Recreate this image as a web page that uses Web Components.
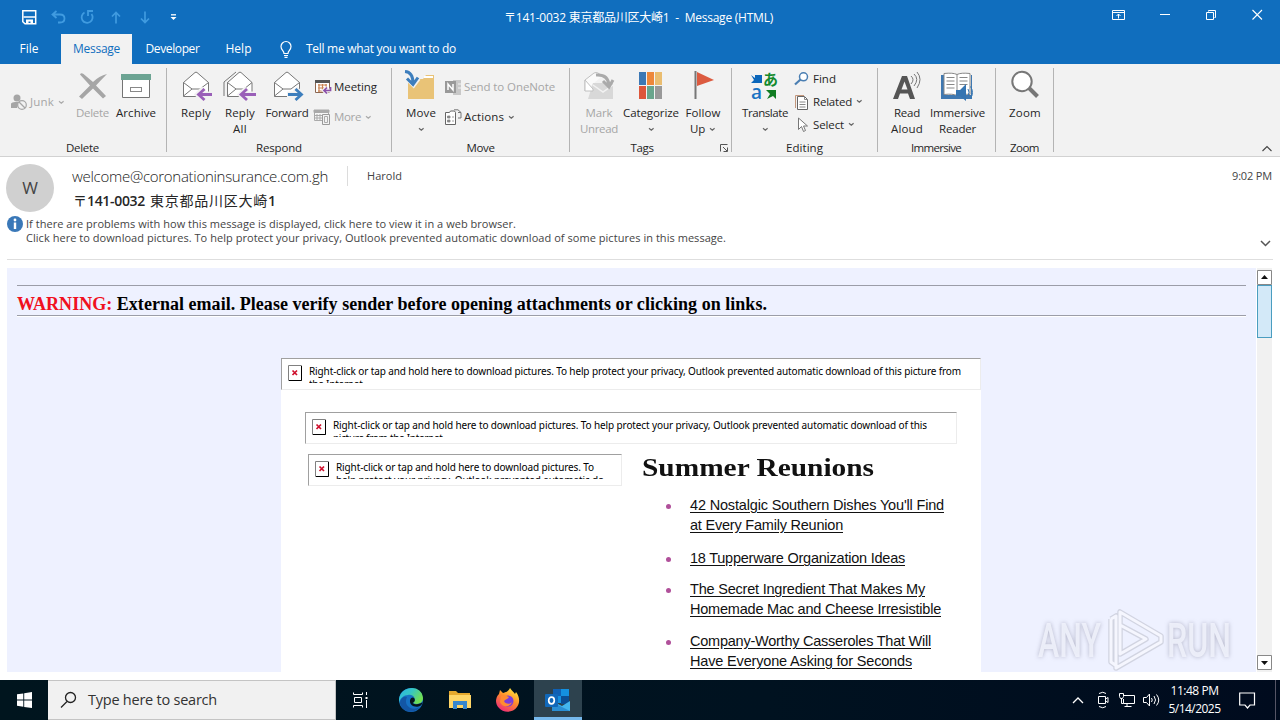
<!DOCTYPE html>
<html lang="en">
<head>
<meta charset="utf-8">
<title>Message (HTML)</title>
<style>
  body {
    margin: 0;
    width: 1280px;
    height: 720px;
    overflow: hidden;
    background: #fff;
    color: #262626;
    font: 11.5px/16px "Open Sans", "Noto Sans CJK JP", sans-serif;
  }
</style>
</head>
<body>
<mail-app></mail-app>

<script>
const icons = {
  save: [15, 15, `<path d="M.8.8h12.900v12.900H3l-2.200-2z" fill="none" stroke="#fff" stroke-width="1.500"/><path d="M1.500 7h11.500" stroke="#fff" stroke-width="1.500"/><path d="M4 14V9.500h7V14H8.500v-2.500H6.500V14z" fill="#fff"/>`],
  undo: [15, 14, `<path d="M5.500 1L1.500 4.500 5.500 8M2 4.500h7c6 0 6 8 0 8H7" fill="none" stroke="#409be0" stroke-width="1.800"/>`],
  redo: [14, 14, `<path d="M4.500 2.500A5.500 5.500 0 1 0 11.500 4M13 1H8v5M8 6V1" fill="none" stroke="#409be0" stroke-width="1.800"/>`],
  up: [10, 13, `<path d="M5 12.500V1.500M1 5.500l4-4 4 4" fill="none" stroke="#409be0" stroke-width="1.700"/>`],
  down: [10, 13, `<path d="M5 .5v11M1 7.500l4 4 4-4" fill="none" stroke="#409be0" stroke-width="1.700"/>`],
  customize: [7, 7, `<path d="M1 .8h5" stroke="#fff" stroke-width="1.300"/><path d="M.5 3h6L3.500 6z" fill="#fff"/>`],
  ribbonbox: [14, 11, `<path d="M.5.5h12v9H.5zM.5 2.500h12M6.500 8.500V4M4.500 6l2-2 2 2" fill="none" stroke="#fff"/>`],
  min: [11, 11, `<path d="M0 4.500h10" stroke="#fff"/>`],
  restore: [11, 11, `<path d="M.5 2.500h7v7h-7zM2.500 1.500v-1h7v7h-1" fill="none" stroke="#fff"/>`],
  close: [11, 11, `<path d="M.5 0l9.500 9.500M10 0L.5 9.500" stroke="#fff" stroke-width="1.100"/>`],
  bulb: [12, 17, `<path d="M4 12.500c0-3-3-3.500-3-7a5 5 0 0 1 10 0c0 3.500-3 4-3 7zM4 14.500h4M4.500 16.300h3" fill="none" stroke="#fff" stroke-width="1.200"/>`],
  chev: [7, 5, `<path d="M1 1.200l2.300 2 2.300-2" fill="none" stroke="currentColor" stroke-width="1.200"/>`],
  collapse: [11, 7, `<path d="M.5 6l4.500-4.500L9.500 6" fill="none" stroke="#444" stroke-width="1.100"/>`],
  expand: [12, 8, `<path d="M1 1l4.500 4.500L10 1" fill="none" stroke="#555" stroke-width="1.500"/>`],
  launcher: [8, 8, `<path d="M.5 7.500v-7h7M3 3l4 4M7.500 3.500v4h-4" fill="none" stroke="#555"/>`],
  junk: [16, 16, `<circle cx="6" cy="4" r="3.500" fill="#a6a6a6"/><path d="M0 14V9.500Q1 8 4 8h4l-2 6z" fill="#a6a6a6"/><circle cx="11" cy="11" r="4.300" fill="#f2f2f2" stroke="#a6a6a6" stroke-width="1.200"/><path d="M8 8l6 6" stroke="#a6a6a6" stroke-width="1.200"/>`],
  del: [30, 28, `<path d="M2 2.500Q3 .5 5.500 2 L15 10 Q21 4 29 2 Q23 8 18 13.500 L28 24 25 26.500 15 16.500 Q9 22 4 27 L1 24.500 12 13.500z" fill="#a6a6a6"/>`],
  archive: [30, 26, `<path d="M1.500 7v17.500h27V7" fill="#fff" stroke="#747474"/><path d="M0 1h30v6H0z" fill="#6ca493"/><rect x="9.500" y="14.500" width="11" height="4" fill="#fff" stroke="#888"/>`],
  reply: [30, 30, `<path d="M1.500 11.500L13 1.500q1-.7 2 0l11.500 10v14h-25z" fill="#fff" stroke="#777"/><path d="M1.500 11.500l8.500 6.500h8l8.500-6.500M1.500 25l8.500-7" fill="none" stroke="#777"/><path d="M29 23.500H17M22 17.500l-6 6 6 6" fill="none" stroke="#f2f2f2" stroke-width="6"/><path d="M30 23.500H17M22.500 18l-6 5.500 6 5.500" fill="none" stroke="#9a5fb8" stroke-width="2.800"/>`],
  replyall: [33, 30, `<path d="M1 25V11L13 1" fill="none" stroke="#777"/><path d="M4.500 11.500L16 1.500q1-.7 2 0l11 10v14H4.500z" fill="#fff" stroke="#777"/><path d="M4.500 11.500l8.500 6.500h8l8-6.500M4.500 25l8.500-7" fill="none" stroke="#777"/><path d="M33 23.500H18M24 17.500l-6 6 6 6" fill="none" stroke="#f2f2f2" stroke-width="6"/><path d="M33 23.500H18M24 18l-6 5.500 6 5.500" fill="none" stroke="#9a5fb8" stroke-width="2.800"/>`],
  forward: [30, 30, `<path d="M1.500 11.500L13 1.500q1-.7 2 0l11.500 10v14h-25z" fill="#fff" stroke="#777"/><path d="M1.500 11.500l8.500 6.500h8l8.500-6.500M1.500 25l8.500-7" fill="none" stroke="#777"/><path d="M14 23.500h13M22 17.500l6 6-6 6" fill="none" stroke="#f2f2f2" stroke-width="6"/><path d="M15 23.500h13M22.500 18l6 5.500-6 5.500" fill="none" stroke="#3d7ebd" stroke-width="2.800"/>`],
  meeting: [16, 16, `<path d="M.5 1.500h14v12H.5z" fill="#fff" stroke="#8b6650"/><path d="M0 1h15v3H0z" fill="#555"/><path d="M3 6h9M3 9h6M3 12h5M4 5v8M7.500 5v8M11 5v4" stroke="#c98250" stroke-width="1.200"/><path d="M15 11.500H9M12 8.500l-3 3 3 3" fill="none" stroke="#f2f2f2" stroke-width="4"/><path d="M15.500 8v3.500H9M12 8.500l-3 3 3 3" fill="none" stroke="#8a50a8" stroke-width="1.700"/>`],
  more: [16, 16, `<path d="M.5 1.500h14v10H.5z" fill="#f6f6f6" stroke="#aaa"/><path d="M0 1h15v2.500H0zM3 5v6M6 5v6M1 6.500h7M1 9h7" fill="#aaa" stroke="#aaa"/><path d="M8.500 5.500h7v10h-7z" fill="#f2f2f2" stroke="#999"/><path d="M10.500 7.500h3v6h-3z" fill="none" stroke="#aaa"/>`],
  move: [31, 29, `<path d="M3 9h15l3-4h8v24H3z" fill="#e9c377"/><path d="M19 7h9" stroke="#fff" stroke-width="2"/><path d="M0 0q9 1 9 12M2.500 8l6 6 4.500-6" fill="none" stroke="#f2f2f2" stroke-width="6"/><path d="M0 1.500q8 .5 8 12M2 8.500l6 6 5-7" fill="none" stroke="#3d7ebd" stroke-width="3"/>`],
  onenote: [16, 16, `<path d="M8 1h8v15H8z" fill="#c8c8c8"/><path d="M0 2h11v12H0z" fill="#999"/><path d="M3 11V5l5 6V5" fill="none" stroke="#fff" stroke-width="1.500"/><path d="M13 5h3M13 9h3" stroke="#f2f2f2"/>`],
  actions: [17, 17, `<path d="M.5 3.500h4l1-1.500h4l1 1.500v12H.5z" fill="#fff" stroke="#666"/><path d="M2.500 7h2.500v2H2.500zM2.500 11h2.500v2H2.500zM7 8h2M7 12h2" fill="#888" stroke="#888" stroke-width=".8"/><path d="M9 .8h4l3 2.700V9h-3M13 3.500h3" fill="none" stroke="#777"/>`],
  unread: [30, 30, `<path d="M1 20V9L10 2q2-1 4 0l4 3" fill="#fafafa" stroke="#c0c0c0"/><path d="M9 12h20v16H4z" fill="#d8d8d8"/><path d="M1 9l8 9v2H1z" fill="#fff" stroke="#c0c0c0"/><path d="M9 14l10 7 10-7" fill="none" stroke="#f2f2f2" stroke-width="1.500"/><path d="M12 4q12-1 13 10M19 10l6 6 4-7" fill="none" stroke="#aaa" stroke-width="3"/>`],
  categorize: [24, 28, `<path d="M0 0h7v13H0z" fill="#3c78b5"/><path d="M8 0h7v13H8z" fill="#ed873a"/><path d="M16 0h7v13h-7z" fill="#eabd70"/><path d="M0 14h7v13H0z" fill="#dd563b"/><path d="M8 14h7v13H8z" fill="#69a58c"/><path d="M16 14h7v13h-7z" fill="#999"/>`],
  flag: [20, 30, `<path d="M1.500 0v28" stroke="#777" stroke-width="2"/><path d="M3 1l17 8L3 15z" fill="#dc5b40"/>`],
  translate: [28, 30, `<path d="M1 4l4 3V4h7v8H1l3-3z" fill="#0b66bb"/><text x="1" y="28" font-family="Open Sans, sans-serif" font-size="19" font-weight="600" fill="#1a73c4">a</text><text x="13" y="14" font-family="Noto Sans CJK JP" font-size="15" font-weight="700" fill="#138a2d">あ</text><path d="M16 19h10v9l-3-3-6 3 3-5z" fill="#107c22"/>`],
  find: [16, 14, `<circle cx="9.500" cy="4.800" r="4" fill="#fff" stroke="#4a7eb2" stroke-width="1.500"/><path d="M6.500 7.500L1 12.500" stroke="#4a7eb2" stroke-width="2.200"/>`],
  related: [15, 16, `<path d="M1.500 14V1.500H10" fill="none" stroke="#c3977c"/><path d="M3.500 2.500h7l3 3v10h-10z" fill="#fff" stroke="#666"/><path d="M10.500 2.500v3h3M5.500 8h6M5.500 10.500h6M5.500 13h6" fill="none" stroke="#888"/>`],
  select: [16, 16, `<path d="M4.500 1v11.500l3-3 2 5 2-1-2-4.500h4z" fill="#fff" stroke="#777"/>`],
  read: [30, 30, `<path d="M1 28L10 5h5l8 23h-5l-2-5.500H8L6 28zM9.500 18.500h6l-3-8z" fill="#555"/><path d="M19 5q4 3.500 0 8M22 3q5.500 5 0 12M25 1q6 7 0 16" fill="none" stroke="#777"/>`],
  reader: [33, 31, `<path d="M0 4h4v20h10q2 0 3 1 1-1 3-1h10V4h1v24H0z" fill="#3f78b1"/><path d="M3 2.500q9-1 13 1 4-2 13-1v21q-9-1-13 1-4-2-13-1z" fill="#fff" stroke="#888"/><path d="M16 3.500v21M5.500 6.500h8M5.500 10h8M5.500 13.500h8M5.500 17h8M18.500 6.500h8M18.500 10h8M18.500 13.500h8" stroke="#888"/><path d="M15 19h4l6-6v17l-6-5h-4z" fill="#3575b2"/><path d="M27 18q2 3 0 7M29.500 15.500q4 6 0 12" fill="none" stroke="#3575b2"/>`],
  zoom: [30, 30, `<circle cx="12" cy="10.500" r="9.700" fill="#fff" stroke="#777" stroke-width="2"/><path d="M19 17l8.500 8.500" stroke="#777" stroke-width="4"/>`],
  info: [16, 16, `<circle cx="8" cy="8" r="8" fill="#3a78b8"/><path d="M8 6.500v6.500" stroke="#fff" stroke-width="2.400"/><circle cx="8" cy="4" r="1.400" fill="#fff"/>`],
  broken: [15, 17, `<path d="M.5.500h13v15H.5z" fill="#fff" stroke="#808080"/><path d="M1 15.500h12.500V1" fill="none" stroke="#000"/><path d="M4.500 5.500l4.500 4.500M9 5.500L4.500 10" stroke="#cf102d" stroke-width="1.700"/>`],
  arrowup: [15, 15, `<path d="M.5.500h14v14H.5z" fill="#fff" stroke="#888"/><path d="M4 9l3.500-4L11 9z" fill="#111"/>`],
  arrowdown: [15, 15, `<path d="M.5.500h14v14H.5z" fill="#fff" stroke="#888"/><path d="M4 6l3.500 4L11 6z" fill="#111"/>`],
  start: [15, 16, `<path d="M0 2.300l6.300-.9v6.200H0zM7.200 1.200L15 0v7.600H7.200zM0 8.500h6.300v6.200L0 13.800zM7.200 8.500H15v7.600l-7.800-1.100z" fill="#fff"/>`],
  search: [17, 18, `<circle cx="10.500" cy="6.500" r="5" fill="none" stroke="#222" stroke-width="1.300"/><path d="M7 10.500L1 16.500" stroke="#222" stroke-width="1.300"/>`],
  taskview: [16, 16, `<path d="M.5.500v2h9v-2M1.500 5.500h7v5h-7zM.5 15.500v-2h9v2M13.500 0v3M13.500 8v8" fill="none" stroke="#fff"/><path d="M12.500 5h2v2h-2z" fill="#fff"/>`],
  edge: [24, 24, `<defs><linearGradient id="e" x1="0" y1="0" x2="1" y2=".5"><stop stop-color="#2cb5e5"/><stop offset=".5" stop-color="#35c6c5"/><stop offset="1" stop-color="#72df50"/></linearGradient></defs><circle cx="12" cy="12" r="12" fill="#1671c4"/><path d="M0 11C2-3 23-4 24 10c0 6-6 7-10 5 4-5 0-9-5-8-4 0-8 3-9 8z" fill="url(#e)"/><path d="M8 9c-4 8 4 15 13 10-7 9-20 4-20-5 1-4 4-6 7-5z" fill="#1356a5"/><path d="M13.500 15c3 2.500 8 1 10-1-.5 3-2 4-4 4.500-5 1-9-2-8.500-6 .5-3 3-4 4.500-2 1 2 0 3.500-2 4.500z" fill="#06151d"/>`],
  folder: [22, 20, `<path d="M0 1h7l2 2h12v15H0z" fill="#e6a92d"/><path d="M0 5h22v13H0z" fill="#ffd667"/><path d="M4 11h14v8h-4v-4H8v4H4z" fill="#3787cf"/>`],
  firefox: [24, 24, `<defs><linearGradient id="f" x1=".8" y1="0" x2=".2" y2="1"><stop stop-color="#ffec3f"/><stop offset=".45" stop-color="#ff8d2b"/><stop offset="1" stop-color="#ed247d"/></linearGradient></defs><path d="M3 6l1-4 3 3c3-1 5-1 7-5 2 3 4 4 5 6l1-2c4 5 4 11 1 15-4 6-14 6-18 1-4-4-4-10 0-14z" fill="url(#f)"/><circle cx="12" cy="13" r="5.500" fill="#7a3cdb"/><path d="M5 8c3-2 6 0 8 1-1 2-3 2-5 4 1 3 6 4 8 1-1 5-10 6-12 0z" fill="#ff8b31"/>`],
  outlook: [26, 24, `<path d="M8 1h16v14H8z" fill="#1490df"/><path d="M8 1h8v7H8z" fill="#0f60b4"/><path d="M16 8h8v8h-8z" fill="#0b4e94"/><path d="M7 13l10 5 8-5v10H7z" fill="#43b6ee"/><path d="M7 14l18 9H7z" fill="#2a8fd4"/><rect y="6" width="13" height="13" rx="1" fill="#1168b9"/><ellipse cx="6.500" cy="12.500" rx="2.800" ry="3.300" fill="none" stroke="#fff" stroke-width="1.700"/>`],
  trayup: [12, 8, `<path d="M1 7l5-5 5 5" fill="none" stroke="#fff" stroke-width="1.300"/>`],
  meet: [12, 16, `<path d="M1.500 4.500h7v7h-7zM8.500 7l2.500-1.500v5L8.500 9M2 1.500q4-2.500 7 0M2 14.500q4 2.500 7 0" fill="none" stroke="#fff"/>`],
  network: [17, 14, `<path d="M5 2.500h10.500v8H4.500V6M8 10.500v3M5.500 13.500h7M.5.500h4v3l-1 2h-2l-1-2zM2.500 6v4.500h2" fill="none" stroke="#fff"/>`],
  volume: [17, 14, `<path d="M.5 4.500h3l3-3.500v12l-3-3.500h-3z" fill="none" stroke="#fff"/><path d="M8.500 5q1.500 2 0 4M11 3q3 4 0 8M13.500 1.500q4.500 5.500 0 11" fill="none" stroke="#fff"/>`],
  notice: [17, 17, `<path d="M.7 1h14.800v12H11l-2.500 3L6 13H.7z" fill="none" stroke="#fff" stroke-width="1.200"/>`],
  play: [56, 62, `<path d="M3 9v43l7 5M3 9l5-3v52l45-26v-6L12 2v42l26-15-26-14" fill="none" stroke="#b9bbc9" stroke-opacity=".55" stroke-width="5.500" stroke-linejoin="round"/><path d="M3 9v43l7 5M3 9l5-3v52l45-26v-6L12 2v42l26-15-26-14" fill="none" stroke="#f5f6fe" stroke-width="3" stroke-linejoin="round"/>`]
};

// base class: fills the shadow root from the class's static html
class Base extends HTMLElement {
  constructor() {
    super();
    const template = document.createElement("template");
    template.innerHTML = this.constructor.html;
    this.attachShadow({ mode: "open" });
    this.shadowRoot.appendChild(template.content.cloneNode(true));
  }
}

class UiIcon extends Base {
  static html = `<style>:host{display:block;flex:none;line-height:0} svg{display:block;overflow:visible}</style><span></span>`;
  connectedCallback() {
    const [w, h, body] = icons[this.getAttribute("name")];
    this.shadowRoot.querySelector("span").innerHTML =
      `<svg width="${w}" height="${h}" viewBox="0 0 ${w} ${h}">${body}</svg>`;
  }
}

// text tracked (or, with "stretch", scaled) to the width given in w
class FitText extends Base {
  static html = `<style>
    :host { display: block; flex: none; white-space: pre; }
    span { display: inline-block; transform-origin: 0 50%; text-decoration: var(--line, none); text-underline-offset: 1.5px; }
  </style><span><slot></slot></span>`;
  connectedCallback() {
    const span = this.shadowRoot.querySelector("span");
    const w = Number(this.getAttribute("w"));
    this.style.width = w + "px";
    const natural = span.getBoundingClientRect().width;
    if (this.hasAttribute("stretch")) {
      span.style.transform = `scaleX(${w / natural})`;
    } else {
      const n = this.textContent.length;
      span.style.letterSpacing = (w - natural) / n + "px";
    }
  }
}

class TitleBar extends Base {
  static html = `<style>
    :host { display: grid; grid-template-columns: 504px 1fr 162px; height: 34px; background: #106ebe; color: #fff; font-size: 12px; }
    .quick { display: flex; align-items: center; padding-left: 22px; }
    .name { padding-top: 10px; }
    .win { display: flex; padding: 10px 0 0; }
  </style>
  <div class="quick">
    <ui-icon name="save"></ui-icon>
    <ui-icon name="undo" style="margin-left:14px"></ui-icon>
    <ui-icon name="redo" style="margin-left:14px"></ui-icon>
    <ui-icon name="up" style="margin-left:17px"></ui-icon>
    <ui-icon name="down" style="margin-left:19px"></ui-icon>
    <ui-icon name="customize" style="margin-left:20px"></ui-icon>
  </div>
  <fit-text class="name" w="269">〒141-0032 東京都品川区大崎1  -  Message (HTML)</fit-text>
  <div class="win">
    <ui-icon name="ribbonbox" style="margin-right:34px;margin-left:-6px"></ui-icon>
    <ui-icon name="min" style="margin-right:35px"></ui-icon>
    <ui-icon name="restore" style="margin-right:35px"></ui-icon>
    <ui-icon name="close"></ui-icon>
  </div>`;
}

class TabStrip extends Base {
  static html = `<style>
    :host { display: flex; height: 30px; background: #106ebe; color: #fff; font-size: 12px; }
    div { display: flex; align-items: center; justify-content: center; }
    .active { background: #f2f2f2; color: #106ebe; }
  </style>
  <div style="width:61px"><fit-text w="19" style="margin-right:3px">File</fit-text></div>
  <div class="active" style="width:71px"><fit-text w="47">Message</fit-text></div>
  <div style="width:81px"><fit-text w="54">Developer</fit-text></div>
  <div style="width:51px"><fit-text w="26">Help</fit-text></div>
  <div style="margin-left:16px;gap:14px"><ui-icon name="bulb"></ui-icon><fit-text w="150">Tell me what you want to do</fit-text></div>`;
}

class RibbonGroup extends Base {
  static html = `<style>
    :host { display: grid; grid-template-columns: 1fr 1px; height: 92px; }
    .main { display: flex; flex-direction: column; }
    .items { display: flex; height: 76px; }
    .foot { display: flex; }
    .caption { flex: 1; display: flex; justify-content: center; }
    .sep { margin: 4px 0; background: #b4b4b4; }
  </style>
  <div class="main">
    <div class="items"><slot></slot></div>
    <div class="foot"><div class="caption"><slot name="caption"></slot></div><slot name="launcher"></slot></div>
  </div>
  <div class="sep"></div>`;
}

class BigButton extends Base {
  static html = `<style>
    :host { display: flex; flex-direction: column; align-items: center; flex: none; padding-top: 6px; }
    :host([off]) { color: #a6a6a6; }
    .art { display: flex; align-items: center; height: 32px; margin-bottom: 3px; }
    .second { display: flex; align-items: center; gap: 4px; height: 16px; }
    .second ::slotted(ui-icon), ::slotted(ui-icon) { color: #666; }
  </style>
  <div class="art"><slot name="icon"></slot></div>
  <slot></slot>
  <div class="second"><slot name="second"></slot></div>`;
}

class SmallButton extends Base {
  static html = `<style>
    :host { display: flex; align-items: center; height: var(--row, 30px); }
    :host([off]) { color: #a6a6a6; }
    .art { width: 16px; margin-right: var(--gap, 3px); }
    ui-icon { margin-left: 4px; color: #666; }
    :host([off]) ui-icon { color: #aaa; }
    :host(:not([menu])) .arrow { display: none; }
  </style>
  <div class="art"><slot name="icon"></slot></div>
  <slot></slot>
  <ui-icon class="arrow" name="chev"></ui-icon>`;
}

class MailRibbon extends Base {
  static html = `<style>
    :host { display: flex; height: 92px; background: #f2f2f2; border-bottom: 1px solid #d2d2d2; }
    .stack { display: flex; flex-direction: column; padding-top: 8px; }
    .end { margin: auto 7px 4px auto; }
  </style>
  <ribbon-group style="width:167px">
    <div class="stack" style="width:61px;padding:23px 0 0 11px"><small-button off menu><ui-icon slot="icon" name="junk"></ui-icon><fit-text w="24">Junk</fit-text></small-button></div>
    <big-button off style="width:41px"><ui-icon slot="icon" name="del"></ui-icon><fit-text w="33">Delete</fit-text></big-button>
    <big-button style="width:46px"><ui-icon slot="icon" name="archive"></ui-icon><fit-text w="40">Archive</fit-text></big-button>
    <fit-text slot="caption" w="33" style="margin-right:1px">Delete</fit-text>
  </ribbon-group>
  <ribbon-group style="width:225px">
    <big-button style="width:42px;margin-left:8px"><ui-icon slot="icon" name="reply" style="margin-left:1px"></ui-icon><fit-text w="30">Reply</fit-text></big-button>
    <big-button style="width:46px"><ui-icon slot="icon" name="replyall" style="margin-right:1px"></ui-icon><fit-text w="30">Reply</fit-text><fit-text slot="second" w="14">All</fit-text></big-button>
    <big-button style="width:48px"><ui-icon slot="icon" name="forward" style="margin-left:1px"></ui-icon><fit-text w="43">Forward</fit-text></big-button>
    <div class="stack" style="margin-left:3px;--gap:4px">
      <small-button><ui-icon slot="icon" name="meeting" style="margin-left:1px"></ui-icon><fit-text w="43">Meeting</fit-text></small-button>
      <small-button off menu><ui-icon slot="icon" name="more"></ui-icon><fit-text w="27">More</fit-text></small-button>
    </div>
    <fit-text slot="caption" w="46">Respond</fit-text>
  </ribbon-group>
  <ribbon-group style="width:178px">
    <big-button style="width:42px;margin-left:8px"><ui-icon slot="icon" name="move" style="margin:-3px 2px 0 0"></ui-icon><fit-text w="30">Move</fit-text><ui-icon slot="second" name="chev"></ui-icon></big-button>
    <div class="stack" style="margin-left:3px">
      <small-button off><ui-icon slot="icon" name="onenote"></ui-icon><fit-text w="91">Send to OneNote</fit-text></small-button>
      <small-button menu><ui-icon slot="icon" name="actions"></ui-icon><fit-text w="40">Actions</fit-text></small-button>
    </div>
    <fit-text slot="caption" w="28">Move</fit-text>
  </ribbon-group>
  <ribbon-group style="width:162px">
    <big-button off style="width:44px;margin-left:7px"><ui-icon slot="icon" name="unread"></ui-icon><fit-text w="27">Mark</fit-text><fit-text slot="second" w="38">Unread</fit-text></big-button>
    <big-button style="width:60px"><ui-icon slot="icon" name="categorize"></ui-icon><fit-text w="56">Categorize</fit-text><ui-icon slot="second" name="chev"></ui-icon></big-button>
    <big-button style="width:44px"><ui-icon slot="icon" name="flag" style="margin-left:2px"></ui-icon><fit-text w="35">Follow</fit-text><fit-text slot="second" w="15">Up</fit-text><ui-icon slot="second" name="chev"></ui-icon></big-button>
    <fit-text slot="caption" w="23" style="margin-right:2px">Tags</fit-text>
    <ui-icon slot="launcher" name="launcher" style="margin:4px 3px 0 4px"></ui-icon>
  </ribbon-group>
  <ribbon-group style="width:146px">
    <big-button style="width:50px;margin-left:8px"><ui-icon slot="icon" name="translate" style="margin-right:2px"></ui-icon><fit-text w="46">Translate</fit-text><ui-icon slot="second" name="chev"></ui-icon></big-button>
    <div class="stack" style="margin-left:4px;padding-top:3px;--row:23px">
      <small-button><ui-icon slot="icon" name="find"></ui-icon><fit-text w="23">Find</fit-text></small-button>
      <small-button menu><ui-icon slot="icon" name="related"></ui-icon><fit-text w="39">Related</fit-text></small-button>
      <small-button menu><ui-icon slot="icon" name="select"></ui-icon><fit-text w="31">Select</fit-text></small-button>
    </div>
    <fit-text slot="caption" w="37">Editing</fit-text>
  </ribbon-group>
  <ribbon-group style="width:118px">
    <big-button style="width:40px;margin-left:9px"><ui-icon slot="icon" name="read"></ui-icon><fit-text w="26">Read</fit-text><fit-text slot="second" w="32">Aloud</fit-text></big-button>
    <big-button style="width:61px"><ui-icon slot="icon" name="reader"></ui-icon><fit-text w="55">Immersive</fit-text><fit-text slot="second" w="37">Reader</fit-text></big-button>
    <fit-text slot="caption" w="50" style="margin-right:1px">Immersive</fit-text>
  </ribbon-group>
  <ribbon-group style="width:58px">
    <big-button style="width:42px;margin-left:8px"><ui-icon slot="icon" name="zoom"></ui-icon><fit-text w="32">Zoom</fit-text></big-button>
    <fit-text slot="caption" w="29">Zoom</fit-text>
  </ribbon-group>
  <ui-icon class="end" name="collapse"></ui-icon>`;
}

class MessageHeader extends Base {
  static html = `<style>
    :host { display: block; height: 111px; box-sizing: border-box; color: #444; font-size: 11px; line-height: 14px; }
    .top { display: grid; grid-template-columns: 48px 1fr; padding: 7px 8px 0 6px; column-gap: 18px; height: 48px; }
    .avatar { width: 48px; height: 48px; border-radius: 50%; background: #d0d0d0; font-size: 17px; display: flex; align-items: center; justify-content: center; }
    .row { display: flex; align-items: center; height: 23px; }
    .from { font: 300 15px/20px "Open Sans", sans-serif; color: #222; }
    .bar { width: 1px; height: 20px; margin: 0 19px; background: #dcdcdc; }
    .subject { display: flex; font-size: 14px; line-height: 24px; color: #262626; margin: 2px 0 0 1px; }
    .bold { font-weight: 600; }
    .info { display: grid; grid-template-columns: 16px 1fr 12px; column-gap: 3px; margin: 5px 8px 0 7px; }
    .line { height: 1px; background: #dedede; margin: 11px 7px 0; }
  </style>
  <div class="top">
    <div class="avatar">W</div>
    <div>
      <div class="row">
        <fit-text class="from" w="256">welcome@coronationinsurance.com.gh</fit-text>
        <span class="bar"></span><fit-text w="35">Harold</fit-text>
        <fit-text w="40" style="margin-left:auto">9:02 PM</fit-text>
      </div>
      <div class="subject">
        <fit-text w="14">〒</fit-text><fit-text class="bold" w="58">141-0032</fit-text>
        <fit-text w="118" style="margin-left:5px">東京都品川区大崎</fit-text><fit-text class="bold" w="8">1</fit-text>
      </div>
    </div>
  </div>
  <div class="info">
    <ui-icon name="info" style="margin-top:-1px"></ui-icon>
    <div>
      <fit-text w="490">If there are problems with how this message is displayed, click here to view it in a web browser.</fit-text>
      <fit-text w="700">Click here to download pictures. To help protect your privacy, Outlook prevented automatic download of some pictures in this message.</fit-text>
    </div>
    <ui-icon name="expand" style="margin-top:23px"></ui-icon>
  </div>
  <div class="line"></div>`;
}

class BlockedPicture extends Base {
  static html = `<style>
    :host { display: flex; box-sizing: border-box; height: 32px; padding: 6px 0 0 6px; gap: 6px; background: #fff;
      border: 1px solid; border-color: #a0a0a0 #ececec #ececec #a0a0a0; color: #000; font: 10px/13px "Noto Sans", sans-serif; }
    .text { height: 18px; overflow: hidden; }
  </style>
  <ui-icon name="broken"></ui-icon>
  <div class="text"><slot></slot></div>`;
}

class LinkItem extends Base {
  static html = `<style>
    :host { display: grid; grid-template-columns: 24px 1fr; color: #111; font: 14.5px/20px "Liberation Sans", sans-serif; --line: underline; }
    i { width: 5px; height: 5px; border-radius: 50%; margin-top: 9px; background: #b0509a; }
  </style><i></i><a><slot></slot></a>`;
}

class ScrollBar extends Base {
  static html = `<style>
    :host { display: flex; flex-direction: column; width: 15px; padding: 2px 0; box-sizing: border-box; background: #f1f1f1; }
    .thumb { height: 51px; border: 1px solid #4a9dc0; background: #d3e9f8; }
    .rest { flex: 1; }
  </style>
  <ui-icon name="arrowup"></ui-icon><div class="thumb"></div><div class="rest"></div><ui-icon name="arrowdown"></ui-icon>`;
}

class MessageBody extends Base {
  static html = `<style>
    :host { display: grid; grid-template-columns: 1249px 15px; column-gap: 1px; padding: 0 8px 8px 7px; height: 404px; }
    .page { background: #eef1ff; overflow: hidden; height: 404px; }
    .warn { margin: 17px 10px 0; border: solid #9b9da8; border-width: 1px 0; height: 29px; box-shadow: 0 1px #fff;
      font: bold 18px/36px "Liberation Serif", serif; color: #000; }
    .red { color: #f01020; }
    .mail { width: 700px; margin: 42px 0 0 274px; background: #fff; height: 330px; }
    .cols { display: grid; grid-template-columns: 314px 1fr; column-gap: 20px; padding: 10px 0 0 27px; align-items: start; }
    h1 { margin: -1px 0 0; font: bold 26px/30px "Liberation Serif", serif; color: #111; }
    .list { display: flex; flex-direction: column; gap: 12px; padding: 12px 0 0 24px; }
  </style>
  <div class="page">
    <div class="warn"><fit-text w="750"><span class="red">WARNING:</span> External email. Please verify sender before opening attachments or clicking on links.</fit-text></div>
    <div class="mail">
      <blocked-picture><fit-text w="652">Right-click or tap and hold here to download pictures. To help protect your privacy, Outlook prevented automatic download of this picture from</fit-text><fit-text w="56">the Internet.</fit-text></blocked-picture>
      <blocked-picture style="margin:22px 24px 0"><fit-text w="594">Right-click or tap and hold here to download pictures. To help protect your privacy, Outlook prevented automatic download of this</fit-text><fit-text w="112">picture from the Internet.</fit-text></blocked-picture>
      <div class="cols">
        <blocked-picture><fit-text w="258">Right-click or tap and hold here to download pictures. To</fit-text><fit-text w="268">help protect your privacy, Outlook prevented automatic do</fit-text></blocked-picture>
        <div>
          <h1><fit-text w="232" stretch>Summer Reunions</fit-text></h1>
          <div class="list">
            <link-item><fit-text w="254">42 Nostalgic Southern Dishes You'll Find</fit-text><fit-text w="153">at Every Family Reunion</fit-text></link-item>
            <link-item style="margin:1px 0 -1px"><fit-text w="215">18 Tupperware Organization Ideas</fit-text></link-item>
            <link-item><fit-text w="235">The Secret Ingredient That Makes My</fit-text><fit-text w="251">Homemade Mac and Cheese Irresistible</fit-text></link-item>
            <link-item><fit-text w="241">Company-Worthy Casseroles That Will</fit-text><fit-text w="222">Have Everyone Asking for Seconds</fit-text></link-item>
          </div>
        </div>
      </div>
    </div>
  </div>
  <scroll-bar></scroll-bar>`;
}

class TaskBar extends Base {
  static html = `<style>
    :host { display: flex; height: 40px; background: linear-gradient(90deg, #00151e, #001220 60%, #000b1e); color: #fff; font-size: 12px; line-height: 18px; }
    div { display: flex; align-items: center; justify-content: center; width: 49px; flex: none; }
    .search { box-sizing: border-box; width: 288px; justify-content: flex-start; gap: 11px; padding-left: 12px; background: #f1f1f1; border: 1px solid #c4c4c4; border-left: 0; color: #333; font-size: 14.5px; }
    .on { width: 48px; background: #2d424e; box-shadow: inset 0 -3px #76b9ed; }
    .tray { width: auto; margin-left: auto; }
    .clock { flex-direction: column; width: 53px; margin: 0 18px 0 8px; }
    .desk { width: 1px; height: 40px; margin: 0 4px 0 19px; background: #556; }
  </style>
  <div style="width:48px"><ui-icon name="start"></ui-icon></div>
  <div class="search"><ui-icon name="search"></ui-icon><fit-text w="129">Type here to search</fit-text></div>
  <div><ui-icon name="taskview"></ui-icon></div>
  <div style="width:52px"><ui-icon name="edge"></ui-icon></div>
  <div style="width:45px"><ui-icon name="folder"></ui-icon></div>
  <div style="width:52px"><ui-icon name="firefox"></ui-icon></div>
  <div class="on"><ui-icon name="outlook"></ui-icon></div>
  <div class="tray">
    <ui-icon name="trayup"></ui-icon>
    <ui-icon name="meet" style="margin-left:13px"></ui-icon>
    <ui-icon name="network" style="margin-left:10px"></ui-icon>
    <ui-icon name="volume" style="margin-left:7px"></ui-icon>
    <div class="clock"><fit-text w="48">11:48 PM</fit-text><fit-text w="52">5/14/2025</fit-text></div>
    <ui-icon name="notice"></ui-icon>
    <div class="desk"></div>
  </div>`;
}

// translucent mark lying over the lower right of the message
class WaterMark extends Base {
  static html = `<style>
    :host { position: absolute; left: 1038px; top: 609px; display: flex; align-items: center; height: 64px;
      font: 500 49px/64px Roboto, sans-serif; }
    fit-text { filter: drop-shadow(0 0 2px rgba(110, 110, 135, .5)); color: rgba(240, 242, 252, .9); }
  </style>
  <fit-text stretch w="63">ANY</fit-text><ui-icon name="play" style="margin:0 3px 0 7px"></ui-icon><fit-text stretch w="64">RUN</fit-text>`;
}

class MailApp extends Base {
  static html = `<style>:host{display:block}</style>
  <title-bar></title-bar>
  <tab-strip></tab-strip>
  <mail-ribbon></mail-ribbon>
  <message-header></message-header>
  <message-body></message-body>
  <task-bar></task-bar>
  <water-mark></water-mark>`;
}

customElements.define("ui-icon", UiIcon);
customElements.define("fit-text", FitText);
customElements.define("ribbon-group", RibbonGroup);
customElements.define("big-button", BigButton);
customElements.define("small-button", SmallButton);
customElements.define("blocked-picture", BlockedPicture);
customElements.define("link-item", LinkItem);
customElements.define("scroll-bar", ScrollBar);
customElements.define("title-bar", TitleBar);
customElements.define("tab-strip", TabStrip);
customElements.define("mail-ribbon", MailRibbon);
customElements.define("message-header", MessageHeader);
customElements.define("message-body", MessageBody);
customElements.define("task-bar", TaskBar);
customElements.define("water-mark", WaterMark);
customElements.define("mail-app", MailApp);
</script>
</body>
</html>
